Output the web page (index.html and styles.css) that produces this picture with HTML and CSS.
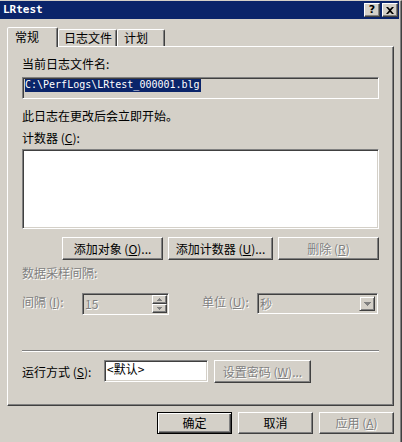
FILE: index.html
```html
<!DOCTYPE html>
<html>
<head>
<meta charset="utf-8">
<link rel="stylesheet" href="styles.css">
</head>
<body>
<div class="win">
  <div class="titlebar">
    <span class="title">LRtest</span>
    <div class="tbtns">
      <span class="tbtn help">?</span>
      <span class="tbtn"><svg width="8" height="7" viewBox="0 0 8 7"><path d="M0 0H2L4 2L6 0H8L5 3.5L8 7H6L4 5L2 7H0L3 3.5Z" fill="#000"/></svg></span>
    </div>
  </div>
  <div class="main">
    <div class="tabs">
      <div class="tab sel">常规</div>
      <div class="tab t2">日志文件</div>
      <div class="tab t3">计划</div>
    </div>
    <div class="panel">
      <div class="lbl">当前日志文件名:</div>
      <div class="field path"><span class="hl">C:\PerfLogs\LRtest_000001.blg</span></div>
      <div class="lbl l2">此日志在更改后会立即开始。</div>
      <div class="lbl l3">计数器 (<u>C</u>):</div>
      <div class="field list"></div>
      <div class="btnrow">
        <div class="btn w101">添加对象 (<u>O</u>)...</div>
        <div class="btn w105">添加计数器 (<u>U</u>)...</div>
        <div class="btn w101 dis">删除 (<u>R</u>)</div>
      </div>
      <div class="lbl l4 dis">数据采样间隔:</div>
      <div class="row r1">
        <span class="lbl rl dis lw60">间隔 (<u>I</u>):</span>
        <div class="field spinf">
          <span class="val dis">15</span>
          <div class="spin">
            <span class="sbtn"><svg width="5" height="3" viewBox="0 0 5 3"><path d="M2 0H3V1H4V2H5V3H0V2H1V1H2Z" fill="#808080"/></svg></span>
            <span class="sbtn"><svg width="5" height="3" viewBox="0 0 5 3"><path d="M0 0H5V1H4V2H3V3H2V2H1V1H0Z" fill="#808080"/></svg></span>
          </div>
        </div>
        <span class="lbl rl dis unit">单位 (<u>U</u>):</span>
        <div class="field combo">
          <span class="val dis">秒</span>
          <span class="dropbtn"><svg width="7" height="4" viewBox="0 0 7 4"><path d="M0 0H7V1H6V2H5V3H4V4H3V3H2V2H1V1H0Z" fill="#808080"/></svg></span>
        </div>
      </div>
      <div class="sep"></div>
      <div class="row r2">
        <span class="lbl rl2 lw82">运行方式 (<u>S</u>):</span>
        <div class="field runas">&lt;默认&gt;</div>
        <div class="btn pw dis">设置密码 (<u>W</u>)...</div>
      </div>
    </div>
    <div class="foot">
      <div class="btn fb def">确定</div>
      <div class="btn fb">取消</div>
      <div class="btn fb dis">应用 (<u>A</u>)</div>
    </div>
  </div>
</div>
</body>
</html>
```
FILE: styles.css
```css
html, body {
  margin: 0;
  padding: 0;
  background: #d4d0c8;
}
.win {
  width: 402px;
  height: 442px;
  box-sizing: border-box;
  background: #d4d0c8;
  border-top: 1px solid #d4d0c8;
  border-right: 1px solid #404040;
  box-shadow: inset -1px 0 #808080;
  font: 12px/14px "Noto Sans CJK SC", sans-serif;
  color: #000;
  overflow: hidden;
}
.titlebar {
  height: 18px;
  margin-right: 2px;
  background: #0a246a;
  display: flex;
  justify-content: space-between;
  align-items: flex-start;
}
.title {
  color: #fff;
  font: bold 11px/18px "DejaVu Sans Mono", monospace;
  padding-left: 3px;
}
.tbtns {
  display: flex;
  gap: 2px;
  margin-top: 2px;
  margin-right: 1px;
}
.tbtn {
  width: 16px;
  height: 14px;
  box-sizing: border-box;
  background: #d4d0c8;
  border: 1px solid;
  border-color: #fff #404040 #404040 #fff;
  box-shadow: inset -1px -1px #808080;
  display: flex;
  align-items: center;
  justify-content: center;
}
.help {
  font: bold 11px/12px "DejaVu Sans", sans-serif;
  color: #000;
}
.main {
  padding: 8px 0 0 7px;
}
.tabs {
  display: flex;
  align-items: flex-end;
  height: 20px;
  margin-bottom: -1px;
  position: relative;
  z-index: 1;
}
.tab {
  box-sizing: border-box;
  height: 17px;
  margin-bottom: 1px;
  border: 1px solid;
  border-bottom: 0;
  border-color: #fff #404040 transparent #fff;
  box-shadow: inset -1px 0 #808080;
  border-radius: 2px 2px 0 0;
  padding: 1px 0 0 5px;
  white-space: nowrap;
}
.tab.sel {
  width: 51px;
  height: 20px;
  margin-bottom: 0;
  padding: 2px 0 0 7px;
  background: #d4d0c8;
}
.t2 { width: 59px; }
.t3 { width: 48px; padding-left: 6px; }
.panel {
  width: 387px;
  box-sizing: border-box;
  border: 1px solid;
  border-color: #fff #404040 #404040 #fff;
  box-shadow: inset -1px -1px #808080;
  padding: 10px 0 22px 14px;
}
.lbl {
  height: 14px;
  white-space: nowrap;
}
.l2 { margin-top: 10px; }
.l3 { margin-top: 8px; }
.l4 { margin-top: 6px; }
.dis {
  color: #808080;
  text-shadow: 1px 1px 0 #fff;
}
.field {
  box-sizing: border-box;
  border: 1px solid;
  border-color: #808080 #fff #fff #808080;
  box-shadow: inset 1px 1px #404040, inset -1px -1px #d4d0c8;
}
.path {
  margin-top: 6px;
  width: 357px;
  height: 22px;
  padding: 1px 0 0 2px;
}
.hl {
  display: inline-block;
  vertical-align: top;
  background: #0a246a;
  color: #fff;
  font-family: "DejaVu Sans Mono", monospace;
  font-size: 10px;
  line-height: 12px;
  height: 13px;
  padding: 0 1px 0 0;
}
.list {
  margin-top: 4px;
  width: 357px;
  height: 80px;
  background: #fff;
}
.btnrow {
  margin-top: 8px;
  width: 357px;
  display: flex;
  justify-content: flex-end;
  gap: 5px;
}
.btn {
  box-sizing: border-box;
  height: 23px;
  border: 1px solid;
  border-color: #fff #404040 #404040 #fff;
  box-shadow: inset -1px -1px #808080;
  display: flex;
  align-items: center;
  justify-content: center;
  white-space: nowrap;
}
.w101 { width: 101px; }
.w105 { width: 105px; }
.row {
  display: flex;
  align-items: flex-start;
}
.r1 {
  margin-top: 13px;
  height: 22px;
}
.rl { margin-top: 2px; }
.rl2 { margin-top: 5px; }
.lw60 { width: 60px; }
.lw82 { width: 82px; }
.spinf {
  width: 87px;
  height: 22px;
  display: flex;
  justify-content: space-between;
  padding: 1px 1px 1px 2px;
}
.val {
  line-height: 16px;
  padding-top: 1px;
}
.spin {
  width: 15px;
  display: flex;
  flex-direction: column;
}
.sbtn {
  flex: 1;
  box-sizing: border-box;
  border: 1px solid;
  border-color: #fff #404040 #404040 #fff;
  box-shadow: inset -1px -1px #808080;
  display: flex;
  align-items: center;
  justify-content: center;
}
.unit {
  margin-left: 33px;
  width: 55px;
}
.combo {
  width: 121px;
  height: 21px;
  display: flex;
  justify-content: space-between;
  padding: 2px 2px 2px 2px;
}
.combo .val {
  line-height: 15px;
  padding-top: 0;
}
.dropbtn {
  width: 16px;
  box-sizing: border-box;
  border: 1px solid;
  border-color: #d4d0c8 #404040 #404040 #d4d0c8;
  box-shadow: inset 1px 1px #fff, inset -1px -1px #808080;
  display: flex;
  align-items: center;
  justify-content: center;
}
.sep {
  margin-top: 35px;
  width: 357px;
  border-top: 1px solid #808080;
  border-bottom: 1px solid #fff;
}
.r2 {
  margin-top: 8px;
}
.runas {
  width: 104px;
  height: 22px;
  background: #fff;
  padding: 1px 0 0 2px;
}
.pw {
  width: 97px;
  margin-left: 6px;
}
.foot {
  margin-top: 6px;
  width: 387px;
  display: flex;
  justify-content: flex-end;
  gap: 6px;
}
.fb {
  width: 75px;
  height: 22px;
}
.def {
  border-color: #000;
  box-shadow: inset 1px 1px #fff, inset -1px -1px #404040, inset -2px -2px #808080;
}
```
